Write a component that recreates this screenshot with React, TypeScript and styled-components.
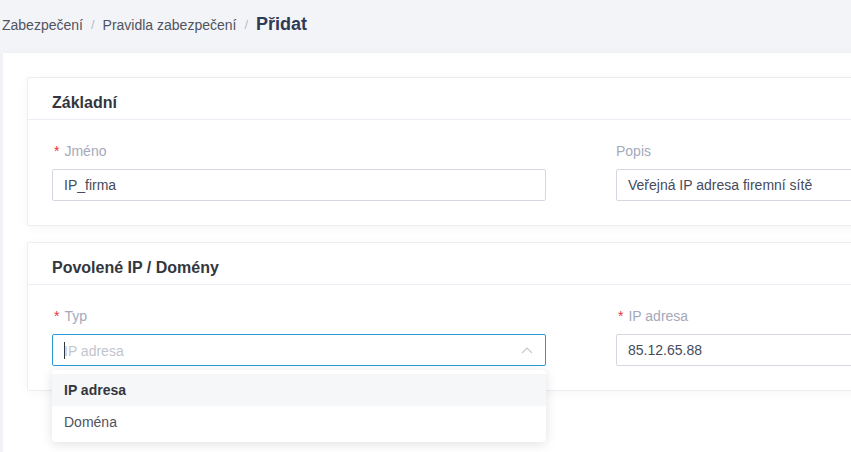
import React from "react";
import styled, { createGlobalStyle } from "styled-components";

const GlobalStyle = createGlobalStyle`
  html, body {
    margin: 0;
    padding: 0;
    background: #f3f4f8;
    overflow: hidden;
  }
  body {
    font-family: "Liberation Sans", Arial, sans-serif;
  }
`;

const Page = styled.div`
  width: 1180px;
`;

const Breadcrumb = styled.div`
  height: 53px;
  display: flex;
  align-items: center;
  padding: 0 0 4px 2px;
  box-sizing: border-box;
  font-size: 14px;
  color: #4f5360;
`;

const Crumb = styled.span<{ $current?: boolean }>`
  font-size: ${(p) => (p.$current ? "18px" : "14px")};
  font-weight: ${(p) => (p.$current ? 700 : 400)};
  color: ${(p) => (p.$current ? "#2f3a55" : "#4f5360")};
`;

const Sep = styled.span`
  margin: 0 8px;
  color: #b8bcc6;
  font-size: 13px;
`;

const Container = styled.div`
  margin-left: 3px;
  background: #fff;
  padding: 24px;
  min-height: 400px;
  box-shadow: 0 0 6px rgba(0, 0, 0, 0.03);
`;

const Card = styled.section`
  width: 1108px;
  box-sizing: border-box;
  border: 1px solid #eceef3;
  border-radius: 2px;
  background: #fff;
  box-shadow: 0 2px 12px rgba(0, 0, 0, 0.04);
  & + & {
    margin-top: 16px;
  }
`;

const CardHeader = styled.div`
  height: 42px;
  box-sizing: border-box;
  display: flex;
  align-items: center;
  padding: 8px 24px 0;
  border-bottom: 1px solid #ebeef5;
  font-size: 16px;
  font-weight: 700;
  color: #33363d;
`;

const CardBody = styled.div`
  display: grid;
  grid-template-columns: 494px 494px;
  column-gap: 70px;
  padding: 21px 24px 24px;
`;

const Field = styled.div`
  display: flex;
  flex-direction: column;
  gap: 8px;
`;

const SelectField = styled(Field)`
  position: relative;
`;

const Label = styled.label`
  height: 20px;
  line-height: 20px;
  font-size: 14px;
  color: #a4a9bc;
`;

const Star = styled.span`
  color: #f0313c;
  margin: 0 5px 0 2px;
`;

const Input = styled.div<{ $focused?: boolean }>`
  height: 32px;
  box-sizing: border-box;
  border: 1px solid ${(p) => (p.$focused ? "#2a9bd8" : "#d6d7e2")};
  border-radius: 2px;
  display: flex;
  align-items: center;
  padding: 0 11px;
  font-size: 14px;
  color: #454b5c;
`;

const Placeholder = styled.span`
  color: #c2c5cf;
  flex: 1;
`;

const Caret = styled.span`
  display: inline-block;
  width: 1px;
  height: 17px;
  background: #333;
  vertical-align: -3px;
  margin-right: -1px;
`;

const Chevron = styled.svg`
  width: 12px;
  height: 8px;
  margin-right: 1px;
`;

const Dropdown = styled.ul`
  position: absolute;
  top: 64px;
  left: 0;
  width: 494px;
  margin: 0;
  padding: 4px 0;
  list-style: none;
  background: #fff;
  border-radius: 4px;
  box-shadow: 0 2px 12px rgba(0, 0, 0, 0.12);
  z-index: 5;
`;

const Option = styled.li<{ $active?: boolean }>`
  height: 32px;
  line-height: 32px;
  padding: 0 12px;
  font-size: 14px;
  color: ${(p) => (p.$active ? "#33363d" : "#4f5360")};
  font-weight: ${(p) => (p.$active ? 700 : 400)};
  background: ${(p) => (p.$active ? "#f6f7f9" : "transparent")};
`;

export default function App() {
  return (
    <Page>
      <GlobalStyle />
      <Breadcrumb>
        <Crumb>Zabezpečení</Crumb>
        <Sep>/</Sep>
        <Crumb>Pravidla zabezpečení</Crumb>
        <Sep>/</Sep>
        <Crumb $current>Přidat</Crumb>
      </Breadcrumb>
      <Container>
        <Card>
          <CardHeader>Základní</CardHeader>
          <CardBody>
            <Field>
              <Label>
                <Star>*</Star>Jméno
              </Label>
              <Input>IP_firma</Input>
            </Field>
            <Field>
              <Label>Popis</Label>
              <Input>Veřejná IP adresa firemní sítě</Input>
            </Field>
          </CardBody>
        </Card>
        <Card>
          <CardHeader>Povolené IP / Domény</CardHeader>
          <CardBody>
            <SelectField>
              <Label>
                <Star>*</Star>Typ
              </Label>
              <Input $focused>
                <Placeholder>
                  <Caret />
                  IP adresa
                </Placeholder>
                <Chevron viewBox="0 0 12 8">
                  <polyline
                    points="1,7 6,2 11,7"
                    fill="none"
                    stroke="#c6c9d1"
                    strokeWidth="1.2"
                  />
                </Chevron>
              </Input>
              <Dropdown>
                <Option $active>IP adresa</Option>
                <Option>Doména</Option>
              </Dropdown>
            </SelectField>
            <Field>
              <Label>
                <Star>*</Star>IP adresa
              </Label>
              <Input>85.12.65.88</Input>
            </Field>
          </CardBody>
        </Card>
      </Container>
    </Page>
  );
}
